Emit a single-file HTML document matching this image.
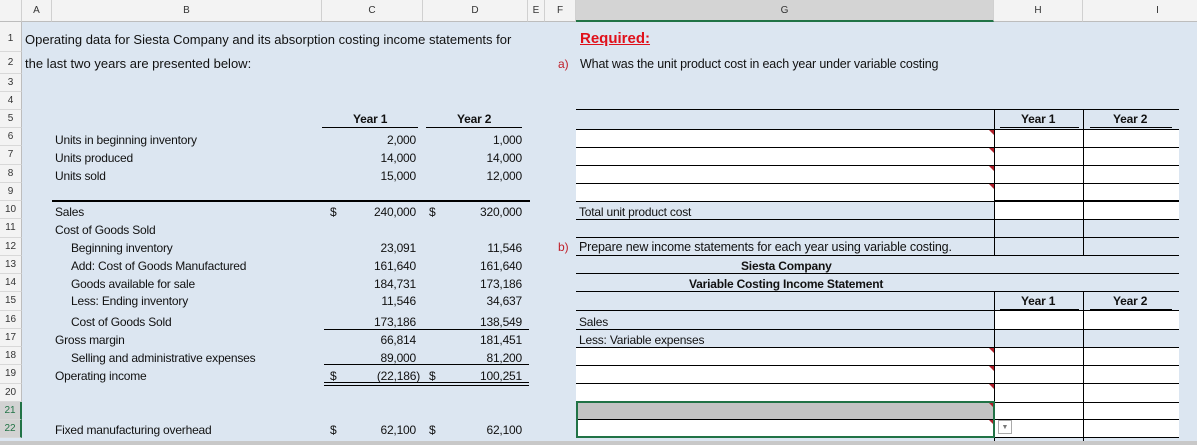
<!DOCTYPE html>
<html><head><meta charset="utf-8"><style>
*{margin:0;padding:0;box-sizing:border-box}
body{width:1197px;height:445px;overflow:hidden;background:#dce6f1;position:relative;font-family:"Liberation Sans",sans-serif}
.a{position:absolute;white-space:nowrap}
.hd{position:absolute;top:0;height:22px;background:#f3f3f3;border-right:1px solid #d0d0d0;border-bottom:1px solid #bdbdbd;font-size:10px;color:#333;text-align:center;line-height:22px}
.rn{position:absolute;left:0;width:22px;background:#f3f3f3;border-right:1px solid #bdbdbd;border-bottom:1px solid #d8d8d8;font-size:10px;color:#333;text-align:center}
.c{font-size:12px;color:#111;letter-spacing:-0.2px}
.n{font-size:12px;color:#111;text-align:right;letter-spacing:-0.2px}
.ln{position:absolute;background:#000}
.w{position:absolute;background:#fff}
.tri{position:absolute;width:0;height:0;border-top:5px solid #b0202a;border-left:5px solid transparent}
</style></head><body>
<div class="hd" style="left:0;width:22px"></div>
<div class="hd" style="left:22px;width:30px">A</div>
<div class="hd" style="left:52px;width:270px">B</div>
<div class="hd" style="left:322px;width:101px">C</div>
<div class="hd" style="left:423px;width:105px">D</div>
<div class="hd" style="left:528px;width:17px">E</div>
<div class="hd" style="left:545px;width:31px">F</div>
<div class="hd" style="left:576px;width:418px;background:#d4d4d4;border-bottom:2px solid #217346">G</div>
<div class="hd" style="left:994px;width:89px">H</div>
<div class="hd" style="left:1083px;width:150px">I</div>

<div class="rn" style="top:22px;height:30px;line-height:34px">1</div>
<div class="rn" style="top:52px;height:22px;line-height:22px">2</div>
<div class="rn" style="top:74px;height:18px;line-height:18px">3</div>
<div class="rn" style="top:92px;height:18px;line-height:18px">4</div>
<div id="rows"></div>
<script>
var h='';for(var r=5;r<=22;r++){var t=110+(r-5)*18.24;var st=(r>=21)?'background:#d2d2d2;color:#217346;border-right:2px solid #217346;':'';h+='<div class="rn" style="top:'+t+'px;height:18.24px;line-height:18px;'+st+'">'+r+'</div>';}
document.getElementById('rows').outerHTML=h;
</script>

<div class="a" style="left:25px;top:32px;font-size:13px;color:#111">Operating data for Siesta Company and its absorption costing income statements for</div>
<div class="a" style="left:25px;top:56px;font-size:13px;color:#111">the last two years are presented below:</div>

<div class="a c" style="left:353px;top:112px;font-weight:bold">Year 1</div>
<div class="a c" style="left:457px;top:112px;font-weight:bold">Year 2</div>
<div class="ln" style="left:322px;top:127px;width:96px;height:1px"></div>
<div class="ln" style="left:426px;top:127px;width:96px;height:1px"></div>

<div class="a c" style="left:55px;top:133px">Units in beginning inventory</div>
<div class="a c" style="left:55px;top:151px">Units produced</div>
<div class="a c" style="left:55px;top:169px">Units sold</div>
<div class="a c" style="left:55px;top:205px">Sales</div>
<div class="a c" style="left:55px;top:223px">Cost of Goods Sold</div>
<div class="a c" style="left:71px;top:241px">Beginning inventory</div>
<div class="a c" style="left:71px;top:259px">Add: Cost of Goods Manufactured</div>
<div class="a c" style="left:71px;top:277px">Goods available for sale</div>
<div class="a c" style="left:71px;top:294px">Less: Ending inventory</div>
<div class="a c" style="left:71px;top:315px">Cost of Goods Sold</div>
<div class="a c" style="left:55px;top:333px">Gross margin</div>
<div class="a c" style="left:71px;top:351px">Selling and administrative expenses</div>
<div class="a c" style="left:55px;top:369px">Operating income</div>
<div class="a c" style="left:55px;top:423px">Fixed manufacturing overhead</div>

<div class="ln" style="left:52px;top:200px;width:478px;height:2px"></div>
<div class="ln" style="left:324px;top:329px;width:205px;height:1px"></div>
<div class="ln" style="left:324px;top:364px;width:205px;height:1px"></div>
<div class="ln" style="left:324px;top:382px;width:205px;height:1px"></div>
<div class="ln" style="left:324px;top:385px;width:205px;height:1px"></div>

<div id="nums"></div>
<script>
var d=[[133,'2,000','1,000'],[151,'14,000','14,000'],[169,'15,000','12,000'],[205,'240,000','320,000'],[241,'23,091','11,546'],[259,'161,640','161,640'],[277,'184,731','173,186'],[294,'11,546','34,637'],[315,'173,186','138,549'],[333,'66,814','181,451'],[351,'89,000','81,200'],[369,'(22,186)','100,251'],[423,'62,100','62,100']];
var s='';d.forEach(function(x){s+='<div class="a n" style="left:330px;width:'+(x[1][0]=='('?90:86)+'px;top:'+x[0]+'px">'+x[1]+'</div><div class="a n" style="left:430px;width:92px;top:'+x[0]+'px">'+x[2]+'</div>';});
[205,369,423].forEach(function(t){s+='<div class="a c" style="left:330px;top:'+t+'px">$</div><div class="a c" style="left:429px;top:'+t+'px">$</div>';});
document.getElementById('nums').outerHTML=s;
</script>

<div class="a" style="left:580px;top:30px;font-size:15px;font-weight:bold;color:#e0101a;text-decoration:underline">Required:</div>
<div class="a" style="left:558px;top:57px;font-size:12px;color:#c0202a">a)</div>
<div class="a" style="left:580px;top:57px;font-size:12.5px;color:#111;letter-spacing:-0.15px">What was the unit product cost in each year under variable costing</div>

<div class="w" style="left:576px;top:129px;width:418px;height:72px"></div>
<div class="w" style="left:994px;top:129px;width:185px;height:90px"></div>
<div class="w" style="left:994px;top:310px;width:185px;height:19px"></div>
<div class="w" style="left:576px;top:347px;width:603px;height:90px"></div>
<div class="a" style="left:576px;top:402px;width:418px;height:17px;background:#c4c4c4"></div>

<div id="rlines"></div>
<script>
var ys=[109,129,147,165,183,201,219,237,255,273,291,310,329,347,365,383,402,419,437];var s='';
ys.forEach(function(y){s+='<div class="ln" style="left:576px;top:'+y+'px;width:603px;height:1px"></div>';});
s+='<div class="ln" style="left:994px;top:200px;width:185px;height:2px"></div>';
[994,1083].forEach(function(x){s+='<div class="ln" style="left:'+x+'px;top:109px;width:1px;height:146px"></div><div class="ln" style="left:'+x+'px;top:291px;width:1px;height:154px"></div>';});
[129,147,165,183,347,365,383,402,419].forEach(function(y){s+='<div class="tri" style="left:989px;top:'+(y+1)+'px"></div>';});
document.getElementById('rlines').outerHTML=s;
</script>
<div class="a" style="left:576px;top:401px;width:419px;height:37px;border:2px solid #217346"></div>
<div class="a" style="left:998px;top:420px;width:14px;height:14px;background:#fff;border:1px solid #aaa;font-size:7px;color:#777;text-align:center;line-height:13px">▼</div>

<div class="a c" style="left:1021px;top:112px;font-weight:bold">Year 1</div>
<div class="a c" style="left:1113px;top:112px;font-weight:bold">Year 2</div>
<div class="ln" style="left:1000px;top:127px;width:79px;height:1px"></div>
<div class="ln" style="left:1090px;top:127px;width:82px;height:1px"></div>
<div class="a c" style="left:1021px;top:294px;font-weight:bold">Year 1</div>
<div class="a c" style="left:1113px;top:294px;font-weight:bold">Year 2</div>
<div class="ln" style="left:1000px;top:309px;width:79px;height:1px"></div>
<div class="ln" style="left:1090px;top:309px;width:82px;height:1px"></div>

<div class="a c" style="left:579px;top:205px">Total unit product cost</div>
<div class="a" style="left:558px;top:240px;font-size:12px;color:#c0202a">b)</div>
<div class="a" style="left:579px;top:240px;font-size:12.5px;color:#111;letter-spacing:-0.15px">Prepare new income statements for each year using variable costing.</div>
<div class="a c" style="left:741px;top:259px;font-weight:bold">Siesta Company</div>
<div class="a c" style="left:689px;top:277px;font-weight:bold">Variable Costing Income Statement</div>
<div class="a c" style="left:579px;top:315px">Sales</div>
<div class="a c" style="left:579px;top:333px">Less: Variable expenses</div>

<div class="a" style="left:0;top:441px;width:1197px;height:4px;background:#c8c8c8"></div>
</body></html>
